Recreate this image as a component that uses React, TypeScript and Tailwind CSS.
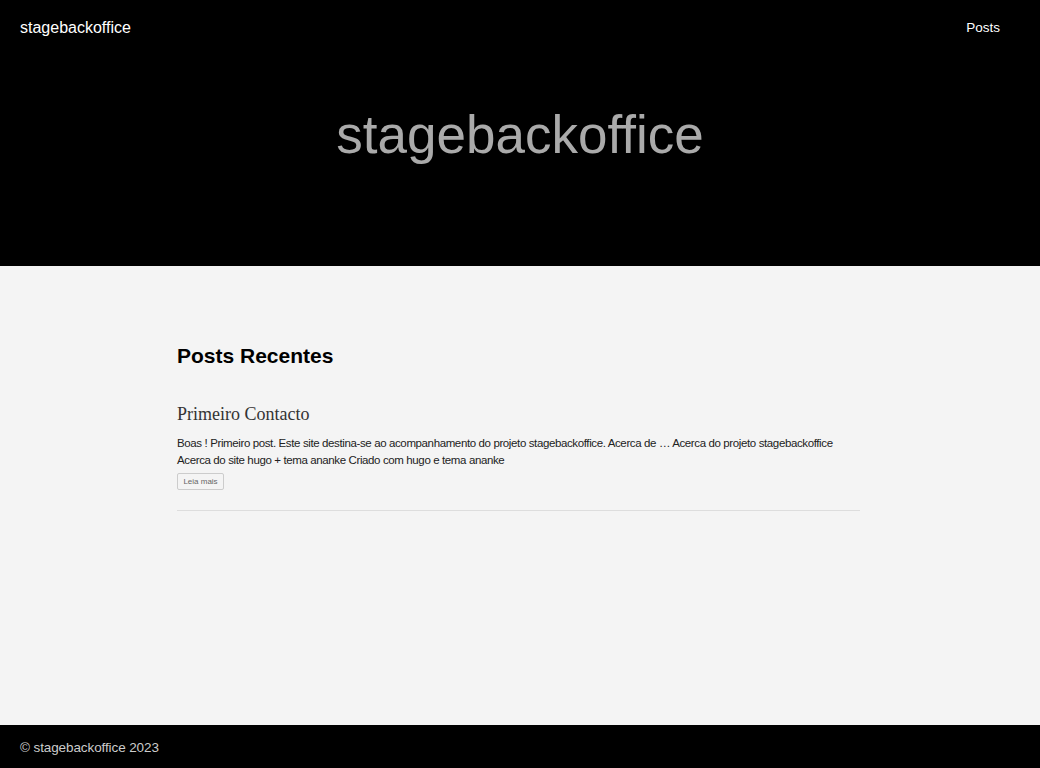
export default function App() {
  return (
    <div className="flex min-h-[768px] flex-col bg-[#f4f4f4] font-['Liberation_Sans',Arial,sans-serif]">
      <header className="h-[266px] bg-black">
        <nav className="flex items-center justify-between pt-[18px] pl-5 pr-10">
          <span className="text-base leading-5 text-white">stagebackoffice</span>
          <span className="text-[13.5px] leading-5 text-white">Posts</span>
        </nav>
        <div className="flex justify-center pt-[67px]">
          <h1 className="text-[53px] leading-[60px] text-[#aaaaaa]">stagebackoffice</h1>
        </div>
      </header>

      <main className="flex-1">
        <section className="ml-[177px] w-[683px] pt-[78px]">
          <h2 className="text-[21px] font-bold leading-6 text-black">Posts Recentes</h2>
          <article className="mt-[34px] border-b border-[#dddddd] pb-[20px]">
            <h3 className="font-['Liberation_Serif',Georgia,serif] text-[18px] leading-6 text-[#333333]">
              Primeiro Contacto
            </h3>
            <p className="mt-[9px] text-[11.5px] leading-[17px] tracking-[-0.38px] text-[#222222]">
              Boas ! Primeiro post. Este site destina-se ao acompanhamento do projeto stagebackoffice. Acerca de … Acerca do projeto stagebackoffice Acerca do site hugo + tema ananke Criado com hugo e tema ananke
            </p>
            <button className="mt-[4px] flex h-[17px] w-[47px] items-center justify-center rounded-[2px] border border-[#cccccc] text-[8px] text-[#666666]">
              Leia mais
            </button>
          </article>
        </section>
      </main>

      <footer className="flex h-[43px] items-center bg-black pl-5 pt-[3px]">
        <span className="text-[13.5px] tracking-[-0.1px] text-[#cccccc]">© stagebackoffice 2023</span>
      </footer>
    </div>
  );
}
